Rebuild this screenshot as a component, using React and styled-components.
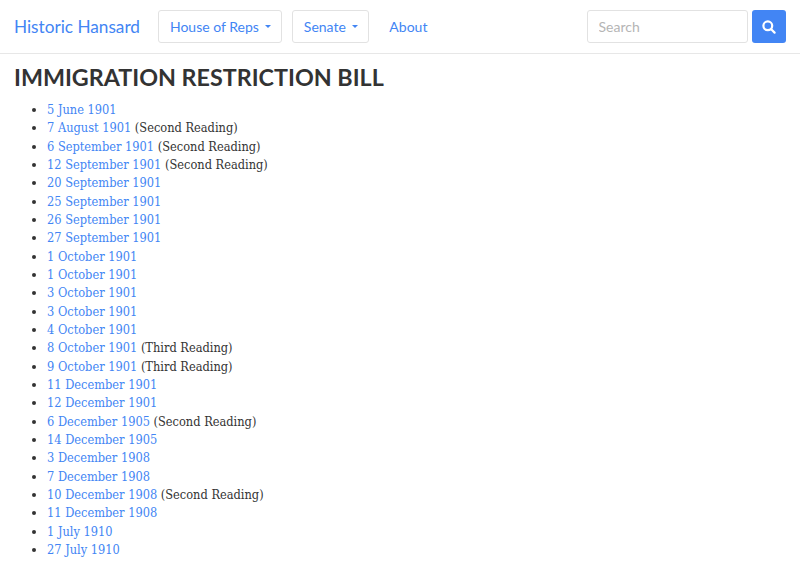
import React from 'react';
import styled, { createGlobalStyle } from 'styled-components';

const GlobalStyle = createGlobalStyle`
  html, body {
    margin: 0;
    height: 562px;
    overflow: hidden;
    background: #fff;
  }
`;

const blue = '#4285f4';

const Navbar = styled.nav`
  display: flex;
  align-items: center;
  height: 53px;
  padding: 0 14px;
  border-bottom: 1px solid #e7e7e7;
  box-sizing: content-box;
  font-family: Lato, "Open Sans", sans-serif;
`;

const Brand = styled.a`
  color: ${blue};
  font-size: 17.2px;
  margin-right: 18.5px;
`;

const NavButton = styled.a`
  display: flex;
  align-items: center;
  height: 33px;
  box-sizing: border-box;
  padding: 0 10.5px 1px;
  margin-right: 10px;
  border: 1px solid #e2e2e2;
  border-radius: 3px;
  color: ${blue};
  font-size: 14px;
`;

const Caret = styled.span`
  width: 0;
  height: 0;
  margin-left: 6px;
  border-top: 3.5px solid ${blue};
  border-left: 3.5px solid transparent;
  border-right: 3.5px solid transparent;
`;

const NavLink = styled.a`
  color: ${blue};
  font-size: 14px;
  margin-left: 10px;
  padding-bottom: 1px;
`;

const SearchForm = styled.form`
  display: flex;
  gap: 4px;
  margin-left: auto;
`;

const SearchInput = styled.input`
  width: 161px;
  height: 33px;
  box-sizing: border-box;
  padding: 0 10.5px 1px;
  border: 1px solid #e2e2e2;
  border-radius: 3px;
  font-family: inherit;
  font-size: 14px;
  outline: none;

  &::placeholder {
    color: #b5b5b5;
    opacity: 1;
  }
`;

const SearchButton = styled.button`
  display: flex;
  align-items: center;
  justify-content: center;
  width: 34px;
  height: 33px;
  padding: 0;
  border: none;
  border-radius: 3px;
  background: ${blue};
`;

const Content = styled.main`
  padding: 0 14px;
`;

const Title = styled.h1`
  margin: 10px 0 10px;
  font-family: Lato, "Open Sans", sans-serif;
  font-size: 23.3px;
  font-weight: 700;
  line-height: 27px;
  color: #333;
`;

const SpeechList = styled.ul`
  margin: 0;
  padding-left: 33px;
  font-family: "DejaVu Serif Condensed", "Liberation Serif", serif;
  font-size: 12.7px;
  line-height: 18.33px;
  color: #333;
`;

const SpeechLink = styled.a`
  color: ${blue};
`;

const speeches = [
  ['5 June 1901'],
  ['7 August 1901', 'Second Reading'],
  ['6 September 1901', 'Second Reading'],
  ['12 September 1901', 'Second Reading'],
  ['20 September 1901'],
  ['25 September 1901'],
  ['26 September 1901'],
  ['27 September 1901'],
  ['1 October 1901'],
  ['1 October 1901'],
  ['3 October 1901'],
  ['3 October 1901'],
  ['4 October 1901'],
  ['8 October 1901', 'Third Reading'],
  ['9 October 1901', 'Third Reading'],
  ['11 December 1901'],
  ['12 December 1901'],
  ['6 December 1905', 'Second Reading'],
  ['14 December 1905'],
  ['3 December 1908'],
  ['7 December 1908'],
  ['10 December 1908', 'Second Reading'],
  ['11 December 1908'],
  ['1 July 1910'],
  ['27 July 1910'],
];

export default function App() {
  return (
    <>
      <GlobalStyle />
      <Navbar>
        <Brand>Historic Hansard</Brand>
        <NavButton>House of Reps<Caret /></NavButton>
        <NavButton>Senate<Caret /></NavButton>
        <NavLink>About</NavLink>
        <SearchForm>
          <SearchInput placeholder="Search" />
          <SearchButton type="button" aria-label="Search">
            <svg width="14" height="14" viewBox="0 0 14 14" fill="none" stroke="#fff" strokeWidth="2.2" strokeLinecap="round">
              <circle cx="5.8" cy="5.8" r="4.4" />
              <path d="M9.2 9.2 12.6 12.6" />
            </svg>
          </SearchButton>
        </SearchForm>
      </Navbar>
      <Content>
        <Title>IMMIGRATION RESTRICTION BILL</Title>
        <SpeechList>
          {speeches.map(([date, stage], i) => (
            <li key={i}>
              <SpeechLink>{date}</SpeechLink>
              {stage && ` (${stage})`}
            </li>
          ))}
        </SpeechList>
      </Content>
    </>
  );
}
